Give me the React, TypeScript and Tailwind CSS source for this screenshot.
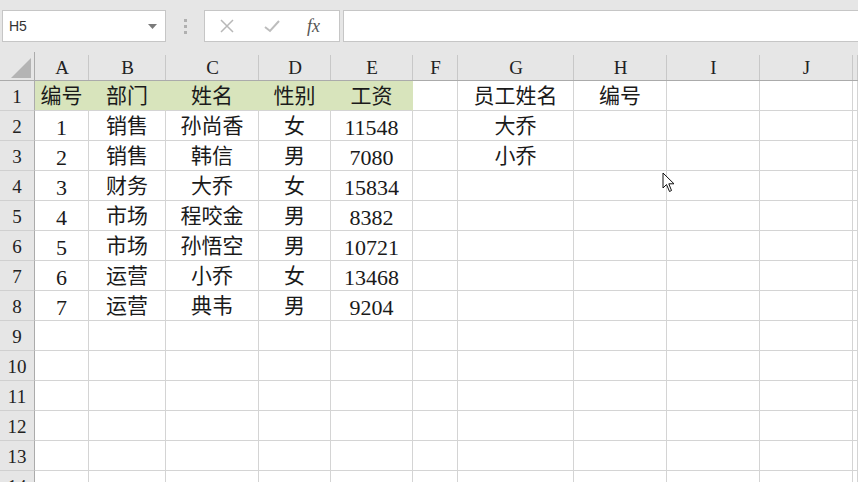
import React from 'react';

const cols = ['A', 'B', 'C', 'D', 'E', 'F', 'G', 'H', 'I', 'J', ''];

const rows: string[][] = [
  ['编号', '部门', '姓名', '性别', '工资', '', '员工姓名', '编号', '', '', ''],
  ['1', '销售', '孙尚香', '女', '11548', '', '大乔', '', '', '', ''],
  ['2', '销售', '韩信', '男', '7080', '', '小乔', '', '', '', ''],
  ['3', '财务', '大乔', '女', '15834', '', '', '', '', '', ''],
  ['4', '市场', '程咬金', '男', '8382', '', '', '', '', '', ''],
  ['5', '市场', '孙悟空', '男', '10721', '', '', '', '', '', ''],
  ['6', '运营', '小乔', '女', '13468', '', '', '', '', '', ''],
  ['7', '运营', '典韦', '男', '9204', '', '', '', '', '', ''],
];

const font = { fontFamily: '"Liberation Serif", "Noto Sans CJK SC", serif' };

const FormulaBar: React.FC = () => (
  <div className="h-[52px] bg-[#e6e6e6] flex items-start pt-[10px] pl-[2px] gap-0">
    <div className="w-[164px] h-[32px] bg-white border border-[#c6c6c6] flex items-center justify-between pl-[6px] pr-[8px]">
      <span className="text-[14px] text-[#333]" style={{ fontFamily: '"Liberation Sans", Arial, sans-serif' }}>H5</span>
      <svg width="9" height="5" viewBox="0 0 9 5">
        <path d="M0 0 L9 0 L4.5 5 Z" fill="#7a7a7a" />
      </svg>
    </div>
    <div className="w-[38px] h-[32px] flex flex-col items-center justify-center gap-[3px]">
      <span className="w-[3px] h-[3px] bg-[#b0b0b0]" />
      <span className="w-[3px] h-[3px] bg-[#b0b0b0]" />
      <span className="w-[3px] h-[3px] bg-[#b0b0b0]" />
    </div>
    <div className="w-[136px] h-[32px] bg-white border border-[#c6c6c6] flex items-center">
      <svg className="ml-[14px]" width="16" height="16" viewBox="0 0 16 16">
        <path d="M2 2 L14 14 M14 2 L2 14" stroke="#b8b8b8" strokeWidth="1.5" />
      </svg>
      <svg className="ml-[28px]" width="18" height="16" viewBox="0 0 18 16">
        <path d="M2 9 L7 13 L16 3" stroke="#bdbdbd" strokeWidth="2" fill="none" />
      </svg>
      <span className="ml-[26px] text-[18px] italic text-[#555]" style={{ fontFamily: '"Liberation Serif", serif' }}>
        fx
      </span>
    </div>
    <div className="ml-[3px] flex-1 h-[32px] bg-white border-y border-l border-[#c6c6c6]" />
  </div>
);

const App: React.FC = () => {
  const widths = 'grid-cols-[35px_54px_77px_93px_72px_82px_45px_116px_93px_93px_93px_1fr]';
  const empty = Array.from({ length: 6 }, () => Array(11).fill(''));
  const allRows = [...rows, ...empty];

  return (
    <div className="w-[858px] h-[482px] overflow-hidden bg-white relative" style={font}>
      <FormulaBar />
      <div className={`grid ${widths}`}>
        <div className="h-[29px] bg-[#e6e6e6] border-r border-b border-[#ababab] flex items-end justify-end pr-[3px] pb-[2px]">
          <svg width="20" height="20" viewBox="0 0 20 20">
            <path d="M20 0 L20 20 L0 20 Z" fill="#b4b4b4" />
          </svg>
        </div>
        {cols.map((c, i) => (
          <div
            key={i}
            className="h-[29px] bg-[#e6e6e6] border-b border-[#ababab] flex items-end justify-center text-[19px] text-[#222] leading-none relative"
          >
            <span className="pb-[3px]">{c}</span>
            <span className="absolute right-0 top-[3px] bottom-0 w-px bg-[#c8c8c8]" />
          </div>
        ))}
        {allRows.map((r, ri) => (
          <React.Fragment key={ri}>
            <div className="h-[30px] pt-[3px] bg-[#e6e6e6] border-r border-b border-[#ababab] border-b-[#d0d0d0] flex items-center justify-center text-[19px] text-[#222]">
              {ri + 1}
            </div>
            {r.map((v, ci) => {
              const green = ri === 0 && ci < 5;
              const num = /^\d+$/.test(v);
              return (
                <div
                  key={ci}
                  className={`h-[30px] pt-[3px] border-b border-r flex items-center justify-center text-[#1a1a1a] ${
                    num ? 'text-[22px]' : 'text-[21px]'
                  } ${green ? 'bg-[#d8e4bc] border-r-[#d8e4bc] border-b-[#d4d4d4]' : 'border-[#d4d4d4]'}`}
                >
                  {v}
                </div>
              );
            })}
          </React.Fragment>
        ))}
      </div>
      <svg className="absolute left-[662px] top-[172px]" width="14" height="21" viewBox="0 0 14 21">
        <path d="M1 1 L1 16 L4.5 12.5 L7.5 19.5 L9.5 18.5 L6.8 11.8 L12 11.8 Z" fill="#fff" stroke="#111" strokeWidth="1" strokeLinejoin="round" />
      </svg>
    </div>
  );
};

export default App;
